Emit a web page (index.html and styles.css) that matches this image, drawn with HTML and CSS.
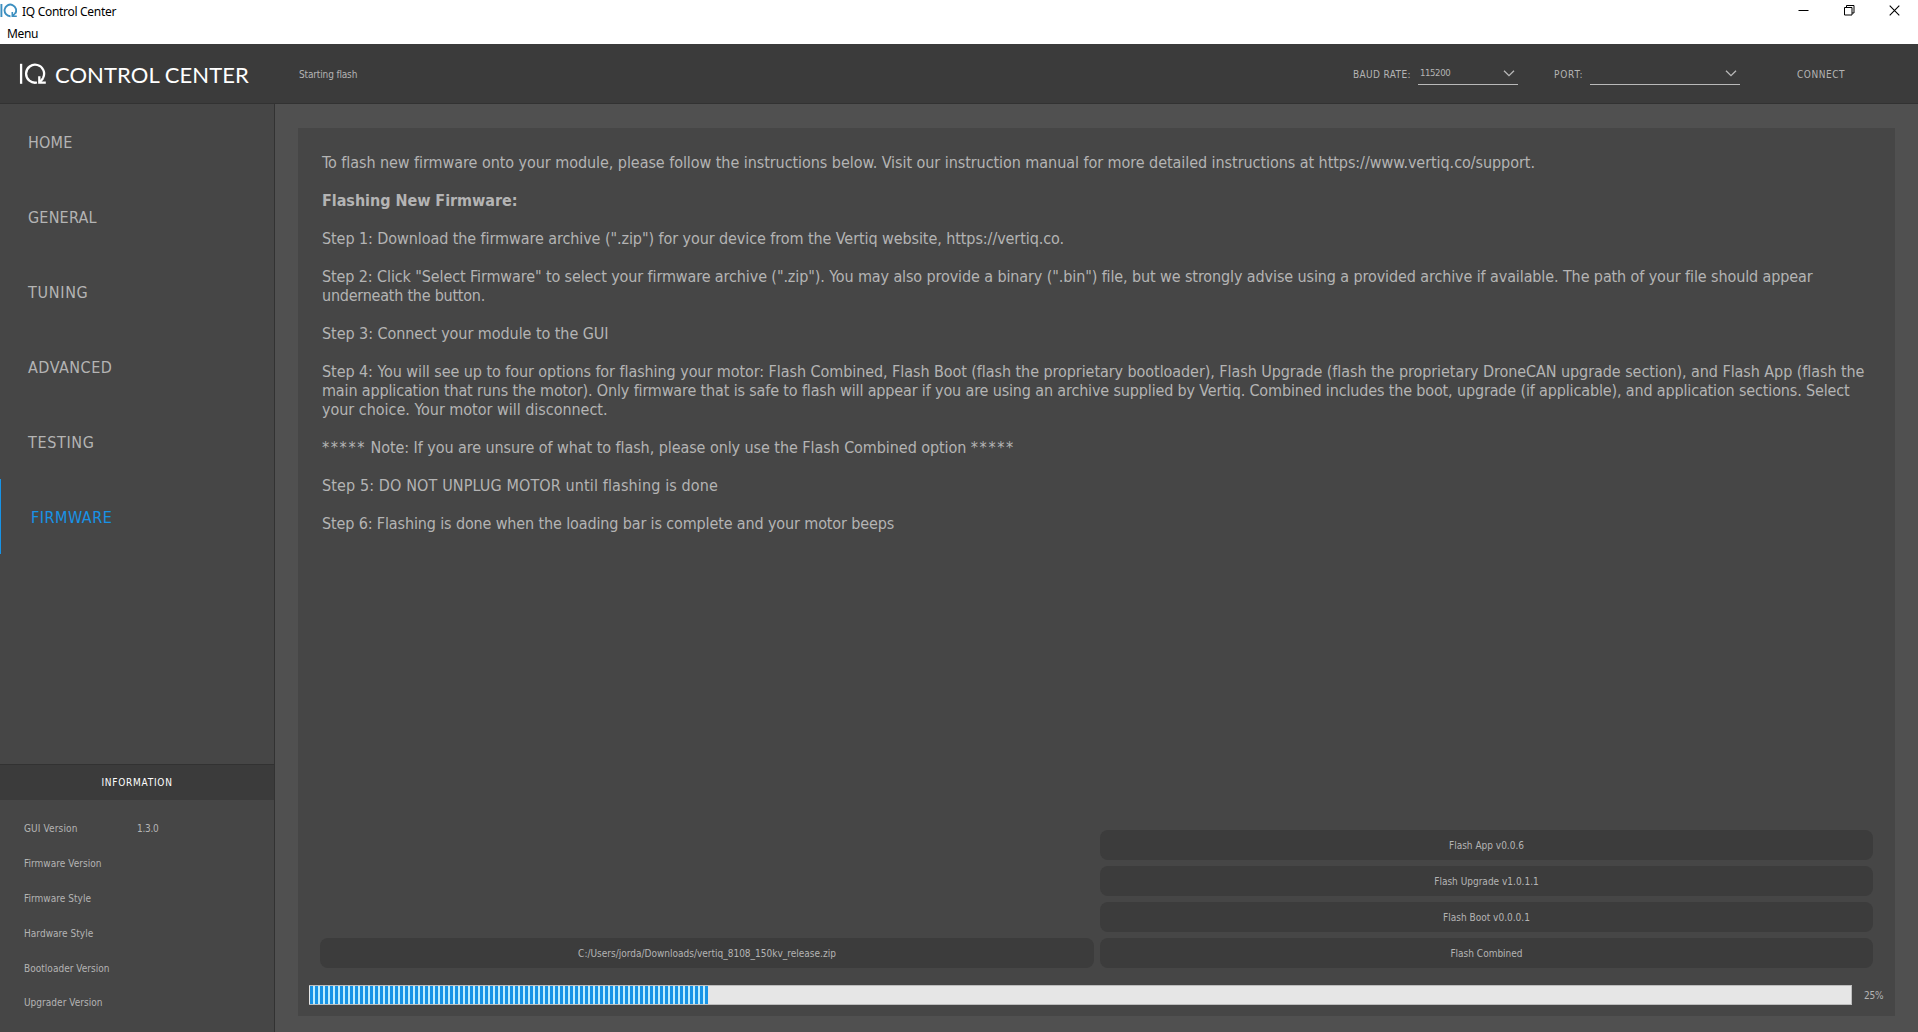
FILE: index.html
```html
<!DOCTYPE html>
<html lang="en">
<head>
<meta charset="utf-8">
<title>IQ Control Center</title>
<link rel="stylesheet" href="styles.css">
</head>
<body>
<div class="window">
  <div class="titlebar">
    <svg class="app-icon" width="17" height="16" viewBox="0 0 17 16" fill="none" stroke="#3c8fc0" stroke-width="1.9">
      <path d="M1.400 1v13"/>
      <path d="M10.500 13.200A5.800 5.800 0 1 1 15.200 10.600"/>
      <path d="M12.300 9v4.300h4.500M12.500 13l3-3" stroke-width="1.600"/>
    </svg>
    <span class="title">IQ Control Center</span>
    <div class="controls">
      <svg width="11" height="11" viewBox="0 0 11 11" stroke="#000"><path d="M0.500 5.500h10"/></svg>
      <svg width="11" height="11" viewBox="0 0 11 11" fill="none" stroke="#000"><path d="M.5 2.500h7.500v7.500h-7.500z M2.500 2.500v-2h7.500v7.500h-2"/></svg>
      <svg width="11" height="11" viewBox="0 0 11 11" stroke="#000" stroke-width="1.100"><path d="M.7 .7l9.600 9.600M10.300 .7l-9.600 9.600"/></svg>
    </div>
  </div>
  <div class="menubar">Menu</div>

  <header class="header">
    <div class="brand">
      <svg width="27" height="22" viewBox="0 0 27 22" fill="none" stroke="#fff" stroke-width="2.300">
        <path d="M2.100 .8v20"/>
        <path d="M18 19.500A9 9 0 1 1 24 15"/>
        <path d="M20.300 13.300v6.400h6.500"/>
        <path d="M20.500 19.500l3.800-4.500"/>
      </svg>
      <span class="brand-name">CONTROL CENTER</span>
    </div>
    <div class="status">Starting flash</div>
    <div class="label baud-label">BAUD RATE:</div>
    <div class="select baud"><span>115200</span>
      <svg width="12" height="7" viewBox="0 0 12 7" fill="none" stroke="#b9b9b9" stroke-width="1.300"><path d="M1 .7l5 5 5-5"/></svg>
    </div>
    <div class="label port-label">PORT:</div>
    <div class="select port"><span></span>
      <svg width="12" height="7" viewBox="0 0 12 7" fill="none" stroke="#b9b9b9" stroke-width="1.300"><path d="M1 .7l5 5 5-5"/></svg>
    </div>
    <div class="connect">CONNECT</div>
  </header>

  <div class="body">
    <aside class="sidebar">
      <nav class="nav">
        <div class="item">HOME</div>
        <div class="item">GENERAL</div>
        <div class="item tuning">TUNING</div>
        <div class="item advanced">ADVANCED</div>
        <div class="item testing">TESTING</div>
        <div class="item active">FIRMWARE</div>
      </nav>
      <div class="info-head">INFORMATION</div>
      <div class="info">
        <div class="row gui"><span>GUI Version</span><span>1.3.0</span></div>
        <div class="row"><span>Firmware Version</span></div>
        <div class="row"><span>Firmware Style</span></div>
        <div class="row"><span>Hardware Style</span></div>
        <div class="row"><span>Bootloader Version</span></div>
        <div class="row"><span>Upgrader Version</span></div>
      </div>
    </aside>

    <main class="main">
      <section class="panel">
        <div class="text">
          <p class="intro">To flash new firmware onto your module, please follow the instructions below. Visit our instruction manual for more detailed instructions at https://www.vertiq.co/support.</p>
          <p class="heading">Flashing New Firmware:</p>
          <p class="step1">Step 1: Download the firmware archive (".zip") for your device from the Vertiq website, https://vertiq.co.</p>
          <p><span class="step2">Step 2: Click "Select Firmware" to select your firmware archive (".zip"). You may also provide a binary (".bin") file, but we strongly advise using a provided archive if available. The path of your file should appear</span><br><span class="step2-end">underneath the button.</span></p>
          <p class="step3">Step 3: Connect your module to the GUI</p>
          <p><span class="step4">Step 4: You will see up to four options for flashing your motor: Flash Combined, Flash Boot (flash the proprietary bootloader), Flash Upgrade (flash the proprietary DroneCAN upgrade section), and Flash App (flash the</span><br><span class="step4-mid">main application that runs the motor). Only firmware that is safe to flash will appear if you are using an archive supplied by Vertiq. Combined includes the boot, upgrade (if applicable), and application sections. Select</span><br><span class="step4-end">your choice. Your motor will disconnect.</span></p>
          <p class="note"><span class="stars">*****</span> Note: If you are unsure of what to flash, please only use the Flash Combined option <span class="stars">*****</span></p>
          <p class="step5">Step 5: DO NOT UNPLUG MOTOR until flashing is done</p>
          <p class="step6">Step 6: Flashing is done when the loading bar is complete and your motor beeps</p>
        </div>
        <div class="actions">
          <div class="btn">C:/Users/jorda/Downloads/vertiq_8108_150kv_release.zip</div>
          <div class="flash">
            <div class="btn">Flash App v0.0.6</div>
            <div class="btn">Flash Upgrade v1.0.1.1</div>
            <div class="btn">Flash Boot v0.0.0.1</div>
            <div class="btn">Flash Combined</div>
          </div>
        </div>
        <div class="progress">
          <div class="track"><div class="fill"></div></div>
          <span class="percent">25%</span>
        </div>
      </section>
    </main>
  </div>
</div>
</body>
</html>
```
FILE: styles.css
```css
* { box-sizing: border-box; }
body { margin: 0; background: #505050; }
.window {
  width: 1918px; height: 1032px; overflow: hidden;
  display: flex; flex-direction: column;
  font: 10px/14px "DejaVu Sans Condensed", "DejaVu Sans", sans-serif;
  color: #b4b4b4; white-space: nowrap;
}
svg { display: block; flex: none; }

.titlebar {
  height: 24px; background: #fff; color: #000;
  display: flex; align-items: flex-start;
  font: 12px/16px "Noto Sans", sans-serif;
}
.app-icon { margin-top: 3px; }
.title { margin: 4px 0 0 5px; letter-spacing: -.3px; }
.controls { margin: 5px 18px 0 auto; display: flex; gap: 34.500px; }
.menubar {
  height: 20px; padding: 2px 0 0 7px; background: #fff; color: #000;
  font: 12px/16px "Noto Sans", sans-serif; letter-spacing: -.35px;
}

.header {
  height: 60px; background: #3b3b3b; border-bottom: 1px solid #323232;
  display: flex; align-items: center;
}
.brand { width: 299px; padding-left: 19px; display: flex; align-items: center; gap: 9px; }
.brand-name { font: 22px/26px Lato, sans-serif; color: #fff; padding-top: 3px; letter-spacing: .06px; }
.status { width: 1054px; padding-top: 3px; letter-spacing: -.15px; }
.label, .connect { padding-top: 3px; letter-spacing: .38px; }
.baud-label { width: 65px; }
.select {
  height: 22px; border-bottom: 1px solid #b9b9b9; margin-top: 1px;
  display: flex; justify-content: space-between; align-items: center;
  padding: 0 3px 1px 2px;
}
.select span { font-size: 9.500px; letter-spacing: -.4px; padding-bottom: 0; }
.baud { width: 100px; }
.port-label { width: 36px; margin-left: 36px; letter-spacing: .8px; }
.port { width: 150px; }
.connect { margin-left: 57px; letter-spacing: .55px; }

.body { flex: 1; display: flex; min-height: 0; }
.sidebar {
  width: 275px; background: #464646; border-right: 1px solid #323232;
  display: flex; flex-direction: column;
}
.nav { height: 660px; }
.item {
  height: 75px; padding: 3px 0 0 28px;
  display: flex; align-items: center; font-size: 16px; letter-spacing: .2px;
}
.tuning { letter-spacing: .7px; }
.advanced { letter-spacing: .5px; }
.testing { letter-spacing: .65px; }
.active { color: #1793e6; border-left: 1px solid #1793e6; padding-left: 30px; letter-spacing: .5px; }
.info-head {
  height: 36px; background: #3b3b3b; border-top: 1px solid #323232; color: #fff;
  display: flex; align-items: center; justify-content: center; letter-spacing: .75px;
}
.info { padding-top: 12px; }
.row { height: 34.800px; display: flex; align-items: center; padding-left: 24px; }
.row span:first-child { width: 113px; letter-spacing: .03px; }
.gui span:first-child { letter-spacing: .13px; }
.gui span:last-child { letter-spacing: -.3px; }

.main { flex: 1; padding: 24px 23px 16px 23px; background: #505050; }
.panel {
  height: 888px; background: #464646; display: flex; flex-direction: column;
  padding: 25px 11px 11px;
}
.text { height: 677px; padding-left: 13px; font-size: 16px; line-height: 19px; }
.text p { margin: 0 0 19px; }
.intro { letter-spacing: -.058px; }
.heading { font-weight: bold; letter-spacing: -.041px; }
.step1 { letter-spacing: -.08px; }
.step2 { letter-spacing: -.109px; }
.step2-end { letter-spacing: -.239px; }
.step3 { letter-spacing: -.056px; }
.step4 { letter-spacing: -.069px; }
.step4-mid { letter-spacing: -.15px; }
.step4-end { letter-spacing: -.024px; }
.note { letter-spacing: -.07px; }
.stars { letter-spacing: 1.600px; }
.step5 { letter-spacing: .118px; }
.step6 { letter-spacing: -.134px; }

.actions { display: grid; grid-template-columns: 774px 773px; gap: 6px; align-items: end; margin: 0 11px; }
.flash { display: flex; flex-direction: column; gap: 6px; }
.btn {
  height: 30px; border-radius: 8px; background: #3c3c3c;
  display: flex; align-items: center; justify-content: center; padding-top: 1px;
}
.progress { height: 20px; margin-top: 17px; display: flex; align-items: center; }
.track { width: 1543px; height: 20px; padding: 0 1px; background: #e6e6e6; border: 1px solid #bcbcbc; border-left: 0; }
.fill {
  width: 398px; height: 18px;
  background: repeating-linear-gradient(90deg, #1793e6 0 3px, #bdeeff 3px 5px);
}
.percent { margin-left: 12px; padding-top: 2px; letter-spacing: -.2px; }
```
